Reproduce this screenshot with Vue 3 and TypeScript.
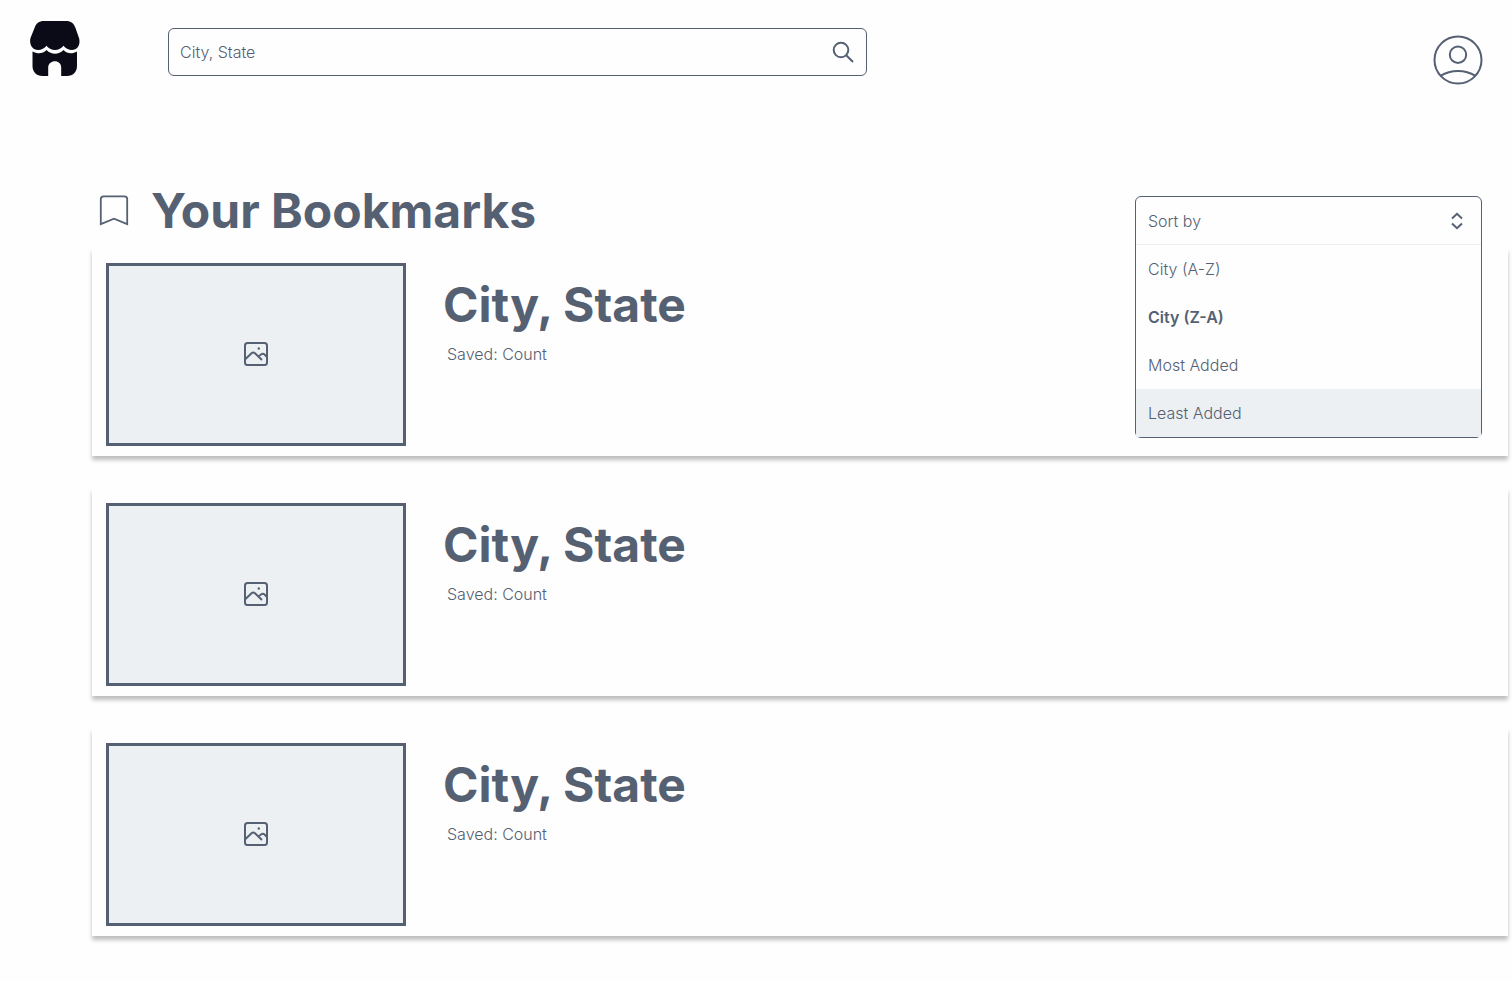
<script setup lang="ts">
import { ref } from 'vue'

interface Place {
  id: number
  name: string
  saved: string
}

const query = ref('')
const menuOpen = ref(true)
const selected = ref('City (Z-A)')
const active = ref('Least Added')
const sortOptions: string[] = ['City (A-Z)', 'City (Z-A)', 'Most Added', 'Least Added']

const places: Place[] = [
  { id: 1, name: 'City, State', saved: 'Saved: Count' },
  { id: 2, name: 'City, State', saved: 'Saved: Count' },
  { id: 3, name: 'City, State', saved: 'Saved: Count' },
]

function choose(option: string): void {
  selected.value = option
  menuOpen.value = false
}
</script>

<template>
  <div class="page">
    <header class="topbar">
      <a class="logo" href="#" aria-label="Home">
        <svg width="50" height="56" viewBox="0 0 50 56" fill="#0b0b17" aria-hidden="true">
          <path d="M14 0H36C41 0 44 2.500 45.500 7L49 17C50.700 23 48 29 42 29C38.500 29 35.500 27.500 33.500 24.800C31.500 27.500 28.500 29 25 29C21.500 29 18.500 27.500 16.500 24.800C14.500 27.500 11.500 29 8 29C2 29 -1 23 .5 17L4.500 7C6 2.500 9 0 14 0Z" />
          <path d="M2.500 30.500C8 33.500 13 32.500 16.500 29C21.500 34 28.500 34 33.500 29C37 32.500 42 33.500 47 30.500V45C47 51 43 55 37 55H31.200V46.500C31.200 42.800 28.400 40.300 24.900 40.300C21.400 40.300 18.200 42.800 18.200 46.500V55H12.500C6.500 55 2.500 51 2.500 45Z" />
        </svg>
      </a>
      <form class="search" role="search" @submit.prevent>
        <input v-model="query" type="text" placeholder="City, State" aria-label="City, State" />
        <button type="submit" aria-label="Search">
          <svg width="24" height="24" viewBox="0 0 24 24" fill="none" stroke="currentColor" stroke-width="2" aria-hidden="true">
            <circle cx="10" cy="10" r="7.300" />
            <path d="M15.200 15.200L22 22" />
          </svg>
        </button>
      </form>
      <button class="avatar" type="button" aria-label="Profile">
        <svg width="50" height="50" viewBox="0 0 50 50" fill="none" stroke="currentColor" stroke-width="2" aria-hidden="true">
          <circle cx="25" cy="25" r="23.500" />
          <circle cx="25" cy="19.700" r="8.200" />
          <path d="M7.500 40.800C18 34.300 32 34.300 42.500 40.800" />
        </svg>
      </button>
    </header>

    <main>
      <div class="heading">
        <svg class="mark" width="30" height="32" viewBox="0 0 30 32" fill="none" stroke="currentColor" stroke-width="1.800" aria-hidden="true">
          <path d="M1.800 30.200V5Q1.800 2.300 4.800 2.300H25.200Q28.200 2.300 28.200 5V30.200L15 24.700Z" />
        </svg>
        <h1>Your Bookmarks</h1>
        <div class="sort">
          <button
            class="sort-toggle"
            type="button"
            aria-haspopup="listbox"
            aria-controls="sort-options"
            :aria-expanded="menuOpen"
            @click="menuOpen = !menuOpen"
          >
            <span>Sort by</span>
            <svg width="24" height="24" viewBox="0 0 24 24" fill="none" stroke="currentColor" stroke-width="2" aria-hidden="true">
              <path d="M7 9.500L12 4.800L17 9.500M7 14.500L12 19.200L17 14.500" />
            </svg>
          </button>
          <div v-show="menuOpen" id="sort-options" role="listbox" aria-label="Sort by">
            <button
              v-for="option in sortOptions"
              :key="option"
              class="option"
              :class="{ selected: option === selected, active: option === active }"
              type="button"
              role="option"
              :aria-selected="option === selected"
              @mouseenter="active = option"
              @click="choose(option)"
            >
              {{ option }}
            </button>
          </div>
        </div>
      </div>

      <section class="cards" aria-label="Bookmarks">
        <article v-for="place in places" :key="place.id" class="card">
          <div class="picture">
            <svg width="24" height="25" viewBox="0 0 24 25" fill="none" stroke="currentColor" stroke-width="2" aria-hidden="true">
              <rect x="1" y="1" width="22" height="22" rx="2.500" />
              <path d="M1.500 17L7.500 11.200Q9.300 9.700 11 11.300L18 18M14.500 14.500L17 12.500Q19 11 20.800 12.700L23 15" />
              <circle cx="14.800" cy="6.500" r="1.200" fill="currentColor" stroke="none" />
            </svg>
          </div>
          <div class="details">
            <h2>{{ place.name }}</h2>
            <p>{{ place.saved }}</p>
          </div>
        </article>
      </section>
    </main>
  </div>
</template>

<style>
body {
  margin: 0;
  background: #fefefe;
}
</style>

<style scoped>
.page {
  color: #556072;
  font-family: Inter, "Liberation Sans", sans-serif;
  font-size: 16px;
  font-weight: 300;
  line-height: 24px;
  padding-bottom: 46px;
}

button,
input {
  box-sizing: border-box;
  margin: 0;
  padding: 0;
  border: 0;
  background: none;
  color: inherit;
  font: inherit;
}

button {
  cursor: pointer;
}

svg {
  display: block;
  flex: none;
}

.topbar {
  display: flex;
  align-items: flex-start;
  padding: 21px 29px 0 30px;
}

.logo {
  flex: none;
  margin-right: 88px;
}

.search {
  box-sizing: border-box;
  display: flex;
  align-items: center;
  flex: 0 1 699px;
  height: 48px;
  margin-top: 7px;
  padding: 0 11px;
  border: 1px solid #556072;
  border-radius: 6px;
  background: #fefefe;
}

.search input {
  flex: 1;
  min-width: 0;
  height: 24px;
  line-height: 24px;
  outline: none;
}

.search input::placeholder {
  color: #556072;
  opacity: 1;
}

.avatar {
  margin: 14px 0 0 auto;
}

.heading {
  display: flex;
  align-items: flex-start;
  padding: 96px 30px 0 99px;
}

.mark {
  margin-top: 13px;
}

h1,
h2 {
  margin: 0;
  font-size: 48px;
  font-weight: 700;
  line-height: 60px;
}

h1 {
  margin-left: 22px;
}

.sort {
  position: relative;
  z-index: 1;
  box-sizing: border-box;
  width: 347px;
  height: 50px;
  margin: 15px 0 -13px auto;
}

.sort::after {
  content: "";
  position: absolute;
  inset: 0 0 -192px;
  border: 1px solid #556072;
  border-radius: 6px;
  pointer-events: none;
}

.sort-toggle {
  display: flex;
  align-items: center;
  justify-content: space-between;
  width: 100%;
  height: 49px;
  padding: 1px 13px 0;
  border-bottom: 1px solid #ecf0f3;
  border-radius: 6px 6px 0 0;
  background: #fefefe;
}

#sort-options {
  position: absolute;
  z-index: 1;
  top: 49px;
  left: 1px;
  right: 1px;
  background: #fefefe;
}

.option {
  display: block;
  width: 100%;
  height: 48px;
  padding: 0 12px;
  text-align: left;
}

.option.selected {
  font-weight: 600;
}

.option.active {
  background: #ecf0f3;
}

.cards {
  display: grid;
  gap: 32px;
  margin: 7px 4px 0 92px;
}

.card {
  display: flex;
  box-sizing: border-box;
  padding: 15px 14px 10px;
  background: #fefefe;
  box-shadow: 0 4px 4px rgba(0, 0, 0, 0.25);
}

.picture {
  box-sizing: border-box;
  display: flex;
  align-items: center;
  justify-content: center;
  flex: none;
  width: 300px;
  height: 183px;
  border: 3px solid #556072;
  background: #ecf0f3;
}

.details {
  padding: 12px 0 0 37px;
}

p {
  margin: 7px 0 0 4px;
}
</style>
